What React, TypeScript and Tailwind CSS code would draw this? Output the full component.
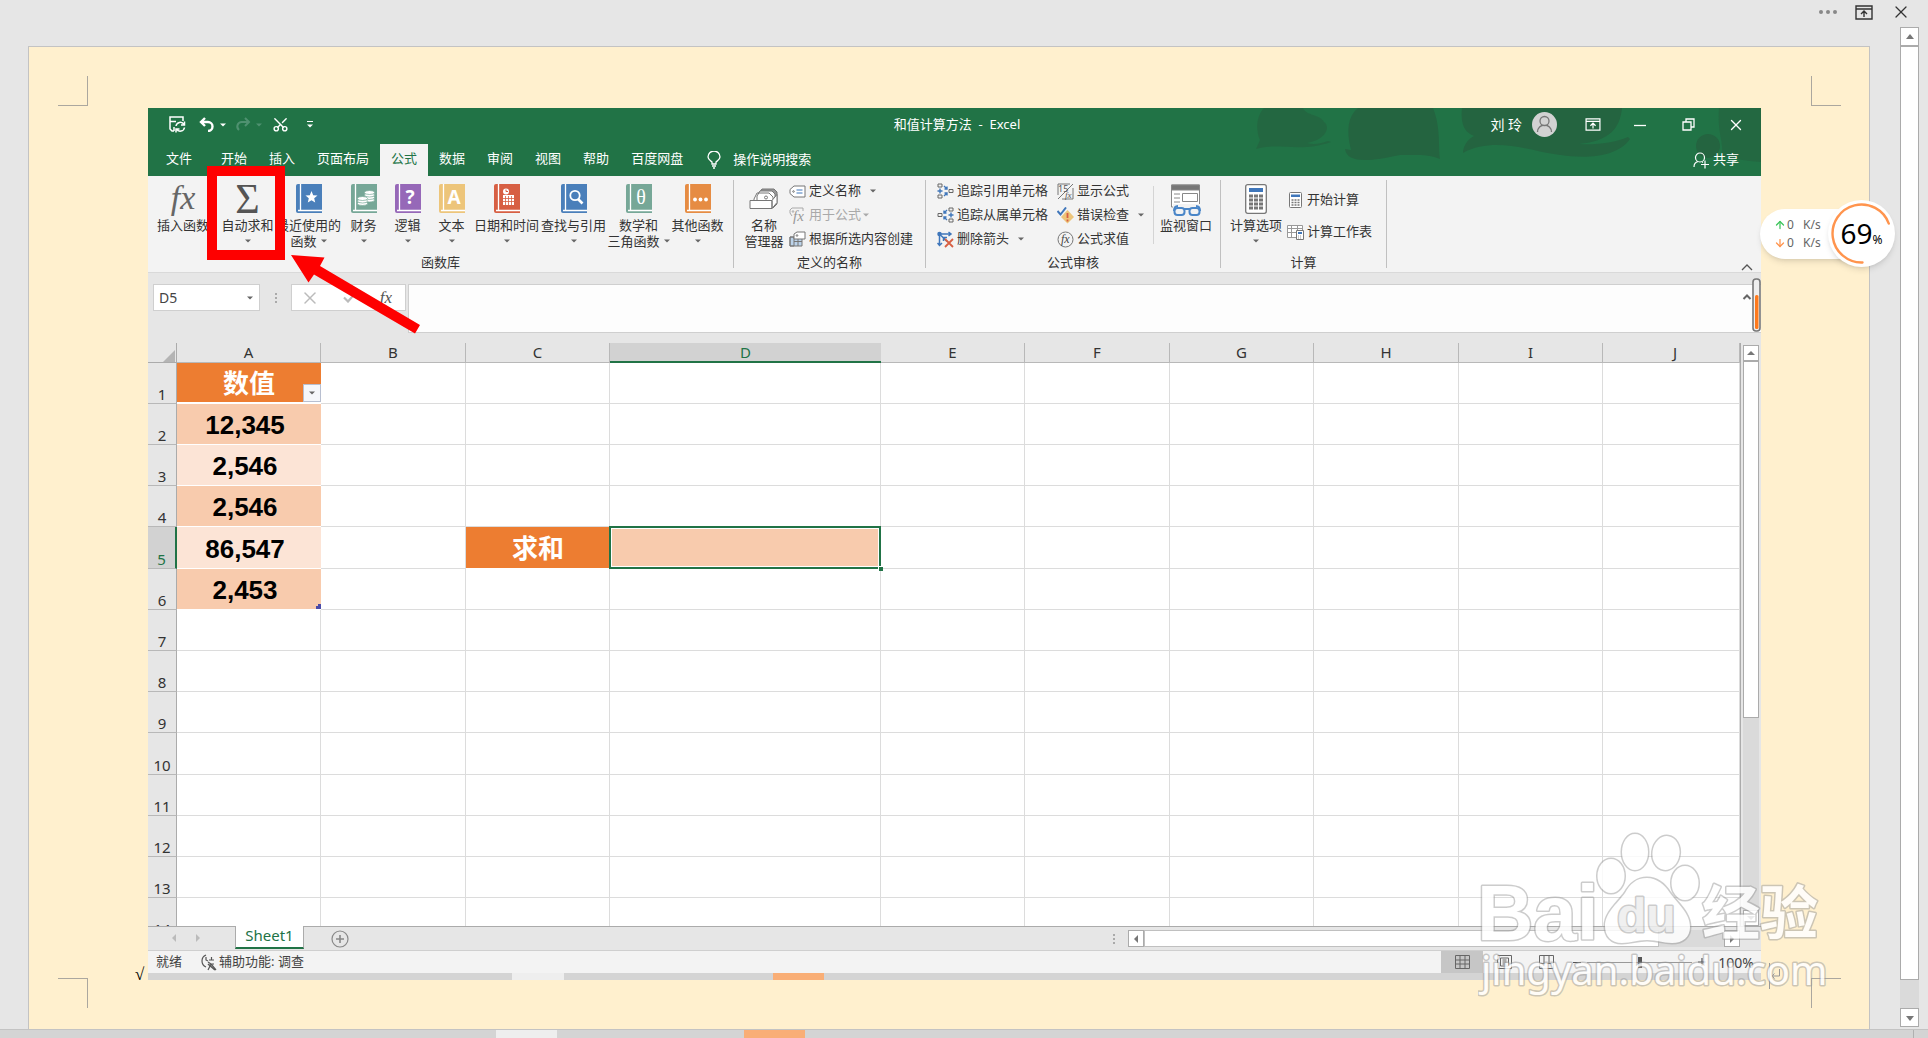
import type { ReactNode } from 'react';
import clsx from 'clsx';
import { ArrowDown, ArrowUp, Scissors, X } from 'lucide-react';

const tabs = ['开始', '插入', '页面布局', '公式', '数据', '审阅', '视图', '帮助', '百度网盘'];
const columns = ['A', 'B', 'C', 'D', 'E', 'F', 'G', 'H', 'I', 'J'];
const rows = [1, 2, 3, 4, 5, 6, 7, 8, 9, 10, 11, 12, 13, 14];
const values: Record<number, string> = { 2: '12,345', 3: '2,546', 4: '2,546', 5: '86,547', 6: '2,453' };

function Caret({ className = 'text-[#666]' }: { className?: string }) {
  return (
    <svg width="6" height="4" viewBox="0 0 6 4" className={clsx('shrink-0', className)} aria-hidden="true">
      <path d="M0 .5h6L3 3.500z" fill="currentColor" />
    </svg>
  );
}

function Triangle({ d, className = 'text-[#777]' }: { d: string; className?: string }) {
  return (
    <svg width="10" height="10" viewBox="0 0 10 10" className={className} aria-hidden="true">
      <path d={d} fill="currentColor" />
    </svg>
  );
}

function Book({ color, children }: { color: string; children: ReactNode }) {
  return (
    <svg width="26" height="29" viewBox="0 0 26 29" aria-hidden="true">
      <path d="M2 0h24v29H2a2 2 0 0 1-2-2V2a2 2 0 0 1 2-2z" fill={color} />
      <path d="M4.500 0v26M2 26.500h24" stroke="#fff" strokeWidth="1.300" />
      {children}
    </svg>
  );
}

function RibbonDisplayIcon({ className }: { className?: string }) {
  return (
    <svg width="18" height="15" viewBox="0 0 18 15" fill="none" stroke="currentColor" strokeWidth="1.400" className={className} aria-hidden="true">
      <path d="M1 1h16v13H1zM1 4h16M9 12V6.500M6 9l3-3 3 3" />
    </svg>
  );
}

function BigButton({ icon, label, second, width, caret = false }: { icon: ReactNode; label: string; second?: string; width: string; caret?: boolean }) {
  return (
    <button type="button" className={clsx('flex shrink-0 flex-col items-center pt-2 text-[13px] leading-4 whitespace-nowrap', width)}>
      <span className="flex h-[33px] items-start justify-center">{icon}</span>
      <span className="flex w-0 justify-center">{label}</span>
      <span className="flex h-4 w-0 items-center justify-center gap-1">
        {second}
        {caret && <Caret />}
      </span>
    </button>
  );
}

function SmallButton({ icon, label, caret, muted = false }: { icon: ReactNode; label: string; caret?: string; muted?: boolean }) {
  return (
    <button type="button" className={clsx('flex h-6 items-center gap-[3px] text-[13px] whitespace-nowrap', muted && 'text-[#a9a9a9]')}>
      <span className="flex w-[17px] shrink-0 justify-center">{icon}</span>
      {label}
      {caret && <Caret className={clsx(caret, muted ? 'text-[#a9a9a9]' : 'text-[#666]')} />}
    </button>
  );
}

function Group({ label, width, inset, children }: { label: string; width: string; inset: string; children: ReactNode }) {
  return (
    <section className={clsx('flex shrink-0 flex-col', width)} aria-label={label}>
      <div className={clsx('flex h-[77px]', inset)}>{children}</div>
      <div className="text-center text-[13px] leading-5">{label}</div>
    </section>
  );
}

function Separator() {
  return <div className="my-1 w-px shrink-0 bg-[#c0c0c0]" />;
}

function TraceIcon({ flip = false }: { flip?: boolean }) {
  return (
    <svg width="17" height="16" viewBox="0 0 17 16" fill="none" className={clsx(flip && 'rotate-180')} aria-hidden="true">
      <path d="M1 1h4v3H1zM1 12h4v3H1zM12 6.500h4v3h-4z" stroke="#666" />
      <path d="M3 5.500v5M0.500 8h5M7 3l3 3M10 3.500V6H7.500M7 13l3-3M7.500 10H10v2.500" stroke="#3f76ba" strokeWidth="1.400" />
    </svg>
  );
}

function TitleBar() {
  return (
    <header className="relative bg-[#217346] text-white">
      <svg width="521" height="68" viewBox="0 0 521 68" className="absolute top-0 right-0" aria-hidden="true">
        <g fill="#246440">
          <path d="M24 0C17 7 15 21 20 32L16 41C38 34 60 45 91 34L88 33C80 36 73 37 67 35C88 31 90 18 84 14C80 6 66 8 63 0Z" opacity=".8" />
          <path d="M118 0C108 8 106 22 111 42L105 41C107 55 128 54 160 47C176 47 190 46 200 51C198 39 201 20 193 0Z" />
          <path d="M222 0C220 18 226 25 234 28C226 32 223 40 223 45C245 33 270 37 294 42C330 51 374 54 390 31L388 29C374 35 356 37 339 36C370 33 380 20 382 0Z" />
          <circle cx="468" cy="38" r="12" />
          <path d="M479 0H521V54C505 53 493 50 482 48C484 34 477 25 479 0Z" opacity=".75" />
        </g>
      </svg>
      <div className="relative flex h-9 items-center pb-[3px]">
        <div className="flex flex-1 items-center pl-[21px]">
          <button type="button" aria-label="保存" className="w-[30px]">
            <svg width="17" height="17" viewBox="0 0 17 17" fill="none" stroke="currentColor" strokeWidth="1.500" aria-hidden="true">
              <path d="M5 15H3L1 13V1h13v4M1.500 5.500H7M5 15v-4" />
              <path d="M7 10a4.300 4.300 0 0 1 8-1.500M15.500 5.500v3.500H12M15.500 11.500a4.300 4.300 0 0 1-8 1.500M7 16.500V13h3.500" />
            </svg>
          </button>
          <button type="button" aria-label="撤消" className="flex w-[36px] items-center gap-[5px]">
            <svg width="16" height="15" viewBox="0 0 16 15" fill="none" stroke="currentColor" strokeWidth="2.400" aria-hidden="true">
              <path d="M6 1L2 5l4 4M2 5h7a4.500 4.500 0 0 1 0 9" />
            </svg>
            <Caret className="text-white" />
          </button>
          <button type="button" aria-label="恢复" className="flex w-[37px] items-center gap-[5px] text-[#4f9170]">
            <svg width="16" height="15" viewBox="0 0 16 15" fill="none" stroke="currentColor" strokeWidth="2" aria-hidden="true">
              <path d="M10 1l4 4-4 4M14 5H7a4.500 4.500 0 0 0-3 8" />
            </svg>
            <Caret className="text-[#4f9170]" />
          </button>
          <button type="button" aria-label="剪切" className="w-[35px]">
            <Scissors size={17} strokeWidth={2} className="-rotate-90" />
          </button>
          <button type="button" aria-label="自定义快速访问工具栏" className="flex flex-col gap-0.5">
            <span className="h-px w-[6px] bg-white" />
            <Caret className="text-white" />
          </button>
        </div>
        <h1 className="text-[13px] whitespace-pre">和值计算方法  -  Excel</h1>
        <div className="flex flex-1 items-center justify-end pr-4">
          <span className="mr-[10px] text-[14px]">刘 玲</span>
          <svg width="25" height="25" viewBox="0 0 25 25" className="mr-7" aria-hidden="true">
            <circle cx="12.500" cy="12.500" r="12.500" fill="#d2d2d2" />
            <path d="M5.500 20a7 7 0 0 1 14 0" fill="none" stroke="#777" strokeWidth="1.300" />
            <circle cx="12.500" cy="9" r="4.500" fill="#d2d2d2" stroke="#777" strokeWidth="1.300" />
          </svg>
          <button type="button" aria-label="功能区显示选项" className="mr-[33px]">
            <RibbonDisplayIcon className="h-[13px] w-[16px]" />
          </button>
          <button type="button" aria-label="最小化" className="mr-9">
            <svg width="12" height="12" viewBox="0 0 12 12" stroke="currentColor" strokeWidth="1.300" aria-hidden="true">
              <path d="M0 6.500h12" />
            </svg>
          </button>
          <button type="button" aria-label="还原" className="mr-8">
            <svg width="13" height="13" viewBox="0 0 13 13" fill="none" stroke="currentColor" strokeWidth="1.300" aria-hidden="true">
              <path d="M1 4h8v8H1zM4 4V1h8v8H9" />
            </svg>
          </button>
          <button type="button" aria-label="关闭">
            <X size={18} strokeWidth={1.800} />
          </button>
        </div>
      </div>
      <nav className="relative flex h-8 items-stretch text-[13px]">
        <button type="button" className="w-[62px] pb-0.5">文件</button>
        {tabs.map((tab) => (
          <button key={tab} type="button" className={clsx('px-[11px] pb-0.5 whitespace-nowrap', tab === '公式' && 'bg-[#f3f3f3] text-[#217346]')}>
            {tab}
          </button>
        ))}
        <button type="button" className="ml-[13px] flex items-center gap-3">
          <svg width="14" height="18" viewBox="0 0 14 18" fill="none" stroke="currentColor" strokeWidth="1.300" aria-hidden="true">
            <path d="M5 13v-2C3 9.500 1 8.500 1 6a5.700 5.700 0 0 1 12 0c0 2.500-2 3.500-4 5v2zM5 15h4M6 17h2" />
          </svg>
          操作说明搜索
        </button>
        <button type="button" className="mr-[22px] ml-auto flex items-center gap-1">
          <svg width="16" height="17" viewBox="0 0 16 17" fill="none" stroke="currentColor" strokeWidth="1.200" aria-hidden="true">
            <circle cx="7" cy="5.500" r="4.500" />
            <path d="M1 15c0-3 2-5 4-5.500M9 10l1 .5M8 12.500h8M12 8.500v8" />
          </svg>
          共享
        </button>
      </nav>
    </header>
  );
}

function Ribbon() {
  return (
    <div className="relative flex h-[97px] border-b border-[#d9d9d9] bg-[#f3f3f3] text-[#333]">
      <Group label="函数库" width="w-[585px]" inset="pl-1">
        <BigButton width="w-[62px]" label="插入函数" icon={<span className="font-['Liberation_Serif'] text-[34px] leading-7 text-[#666] italic">fx</span>} />
        <BigButton width="w-[67px]" label="自动求和" caret icon={<span className="font-['Liberation_Serif'] text-[42px] leading-[30px] text-[#555]">Σ</span>} />
        <BigButton
          width="w-[55px]"
          label="最近使用的"
          second="函数"
          caret
          icon={
            <Book color="#4a7fba">
              <path d="M15.500 7l1.700 4.200 4.300.3-3.300 2.800 1 4.200-3.700-2.300-3.700 2.300 1-4.200-3.300-2.800 4.300-.3z" fill="#fff" />
            </Book>
          }
        />
        <BigButton
          width="w-[55px]"
          label="财务"
          caret
          icon={
            <Book color="#76a797">
              <g fill="#fff" stroke="#76a797" strokeWidth=".7">
                <ellipse cx="18.500" cy="16" rx="5" ry="2" />
                <ellipse cx="18.500" cy="13.500" rx="5" ry="2" />
                <ellipse cx="18.500" cy="11" rx="5" ry="2" />
                <ellipse cx="18.500" cy="8.500" rx="5" ry="2" />
                <ellipse cx="11.500" cy="19.500" rx="5" ry="2" />
                <ellipse cx="11.500" cy="17" rx="5" ry="2" />
                <ellipse cx="11.500" cy="14.500" rx="5" ry="2" />
              </g>
            </Book>
          }
        />
        <BigButton width="w-[33px]" label="逻辑" caret icon={<Book color="#9668b8"><text x="15" y="20" textAnchor="middle" fontSize="19" fontWeight="700" fill="#fff">?</text></Book>} />
        <BigButton width="w-[55px]" label="文本" caret icon={<Book color="#edc57a"><text x="15" y="20" textAnchor="middle" fontSize="19" fontWeight="700" fill="#fff">A</text></Book>} />
        <BigButton
          width="w-[55px]"
          label="日期和时间"
          caret
          icon={
            <Book color="#d75f43">
              <rect x="9" y="11" width="11" height="10" fill="#fff" />
              <path d="M9 14.500h11M9 17.500h11M11.500 12v9M14.500 12v9M17.500 12v9" stroke="#d75f43" strokeWidth=".8" />
              <circle cx="12" cy="7.500" r="3" fill="#fff" />
              <path d="M12 5.500v2h2" fill="none" stroke="#d75f43" />
            </Book>
          }
        />
        <BigButton
          width="w-[79px]"
          label="查找与引用"
          caret
          icon={
            <Book color="#4a7fba">
              <circle cx="14" cy="11.500" r="4.700" fill="none" stroke="#fff" strokeWidth="1.800" />
              <path d="M17 15l4.500 4.500" stroke="#fff" strokeWidth="2.600" />
            </Book>
          }
        />
        <BigButton width="w-[51px]" label="数学和" second="三角函数" caret icon={<Book color="#76a797"><text x="15" y="20" textAnchor="middle" fontSize="20" fontFamily="Liberation Serif" fill="#fff">θ</text></Book>} />
        <BigButton
          width="w-[67px]"
          label="其他函数"
          caret
          icon={
            <Book color="#e68c43">
              <g fill="#fff">
                <circle cx="10" cy="15.500" r="1.900" />
                <circle cx="15.500" cy="15.500" r="1.900" />
                <circle cx="21" cy="15.500" r="1.900" />
              </g>
            </Book>
          }
        />
      </Group>
      <Separator />
      <Group label="定义的名称" width="w-[191px]" inset="pl-[7px]">
        <BigButton
          width="w-[46px]"
          label="名称"
          second="管理器"
          icon={
            <svg width="30" height="28" viewBox="0 0 30 28" fill="#fff" stroke="#777" aria-hidden="true">
              <path d="M9 10l4-5h12l3 3v12l-4 4z" fill="#999" />
              <path d="M8 12l3-5h12l3 3v9H8zM5 15l3-6h12l4 4v6H5z" />
              <circle cx="17" cy="13.500" r="1.500" />
              <path d="M1 16.500h22v8H1zM23 16.500l5-6v8l-5 6z" />
            </svg>
          }
        />
        <div className="ml-[2px] pt-[3px]">
          <SmallButton
            label="定义名称"
            caret="ml-[6px]"
            icon={
              <svg width="17" height="13" viewBox="0 0 17 13" fill="none" stroke="#777" aria-hidden="true">
                <path d="M5 1h11v11H5L1 8.500v-4z" fill="#fff" />
                <circle cx="4.500" cy="6.500" r=".8" />
                <path d="M7.500 5h6M7.500 8h6" stroke="#3f76ba" />
              </svg>
            }
          />
          <SmallButton
            label="用于公式"
            muted
            caret="-ml-px"
            icon={
              <svg width="17" height="17" viewBox="0 0 17 17" fill="none" stroke="#a9a9a9" aria-hidden="true">
                <path d="M3 9L1 6V3l2-2h11v3" />
                <circle cx="4" cy="4.500" r=".8" />
                <text x="4" y="14" fontSize="15" fontStyle="italic" fontFamily="Liberation Serif" fill="#999" stroke="none">fx</text>
              </svg>
            }
          />
          <SmallButton
            label="根据所选内容创建"
            icon={
              <svg width="17" height="16" viewBox="0 0 17 16" fill="#fff" stroke="#777" aria-hidden="true">
                <path d="M1 6h12v9H1z" fill="#bcd3ea" />
                <path d="M1 6h4v9H1zM5 10.500h8M9 6v9" fill="none" />
                <path d="M5 3l3-2h8v7H5z" />
                <circle cx="8" cy="4.500" r=".8" />
              </svg>
            }
          />
        </div>
      </Group>
      <Separator />
      <Group label="公式审核" width="w-[294px]" inset="pl-[11px]">
        <div className="w-[120px] pt-[3px]">
          <SmallButton label="追踪引用单元格" icon={<TraceIcon />} />
          <SmallButton label="追踪从属单元格" icon={<TraceIcon flip />} />
          <SmallButton
            label="删除箭头"
            caret="ml-[6px]"
            icon={
              <svg width="17" height="17" viewBox="0 0 17 17" fill="none" stroke="#3f76ba" strokeWidth="1.500" aria-hidden="true">
                <circle cx="2.500" cy="3" r="1.500" fill="#3f76ba" />
                <path d="M3 3h11M11.500 1L14 3l-2.500 2M2.500 3v11M.5 12l2 2.500L5 12M4 4.500l6 6M6.500 10V6.500H10" />
                <path d="M8 8l8 8M16 8l-8 8" stroke="#d75f43" strokeWidth="1.800" />
              </svg>
            }
          />
        </div>
        <div className="w-[96px] pt-[3px]">
          <SmallButton
            label="显示公式"
            icon={
              <svg width="17" height="17" viewBox="0 0 17 17" fill="none" stroke="#777" aria-hidden="true">
                <path d="M16 5v11H5M1 12V1h12M1 16L16 1" />
                <text x="1" y="9" fontSize="9" fill="#555" stroke="none">15</text>
                <text x="8" y="15" fontSize="9" fontStyle="italic" fontFamily="Liberation Serif" fill="#555" stroke="none">fx</text>
              </svg>
            }
          />
          <SmallButton
            label="错误检查"
            caret="ml-[6px]"
            icon={
              <svg width="17" height="17" viewBox="0 0 17 17" fill="none" aria-hidden="true">
                <path d="M10.500 3l6.500 7-6.500 6.500-6.500-6.500z" fill="#edc57a" />
                <path d="M10.500 6v5M10.500 12.500v2" stroke="#d75f43" strokeWidth="1.800" />
                <path d="M.5 4l3 3.500L9 .5" stroke="#3f76ba" strokeWidth="2" />
              </svg>
            }
          />
          <SmallButton
            label="公式求值"
            icon={
              <svg width="17" height="17" viewBox="0 0 17 17" fill="none" stroke="#777" aria-hidden="true">
                <circle cx="8.500" cy="8.500" r="7.500" />
                <text x="4" y="12" fontSize="12" fontStyle="italic" fontFamily="Liberation Serif" fill="#444" stroke="none">fx</text>
              </svg>
            }
          />
        </div>
        <div className="mt-[10px] h-[58px] w-px bg-[#d4d4d4]" />
        <BigButton
          width="w-[64px]"
          label="监视窗口"
          icon={
            <svg width="32" height="33" viewBox="0 0 32 33" fill="none" stroke="#888" aria-hidden="true">
              <path d="M1.500 1h28v22h-28z" fill="#fff" />
              <path d="M1.500 1h28v5h-28z" fill="#777" />
              <path d="M4 10h6M4 14h6M4 18h6M12.500 9.500h15v8h-15z" />
              <path d="M3 20h29v13H3z" fill="#f3f3f3" stroke="none" />
              <path d="M4 27c0-4 2-5 4-5M30 27c0-4-2-5-4-5M14 25h6" stroke="#4a86c8" strokeWidth="2" />
              <rect x="4.500" y="24" width="10" height="7" rx="3" stroke="#4a86c8" strokeWidth="2" />
              <rect x="19.500" y="24" width="10" height="7" rx="3" stroke="#4a86c8" strokeWidth="2" />
            </svg>
          }
        />
      </Group>
      <Separator />
      <Group label="计算" width="w-[165px]" inset="pl-1">
        <BigButton
          width="w-[62px]"
          label="计算选项"
          caret
          icon={
            <svg width="22" height="30" viewBox="0 0 22 30" aria-hidden="true">
              <rect x=".7" y=".7" width="20.600" height="28.600" rx="2" fill="#fff" stroke="#777" strokeWidth="1.300" />
              <path d="M4 4h14v4H4z" fill="#3f76ba" />
              <path d="M4 12h14M4 16h14M4 20h14M4 24h14" stroke="#777" strokeWidth="3" strokeDasharray="4 1" />
            </svg>
          }
        />
        <div className="pt-3">
          <SmallButton
            label="开始计算"
            icon={
              <svg width="13" height="16" viewBox="0 0 13 16" aria-hidden="true">
                <rect x=".5" y=".5" width="12" height="15" rx="1" fill="#fff" stroke="#777" />
                <path d="M2 2.500h9v2.500H2z" fill="#3f76ba" />
                <path d="M2.500 8h8M2.500 10.500h8M2.500 13h8" stroke="#777" strokeWidth="1.500" strokeDasharray="2 1" />
              </svg>
            }
          />
          <div className="h-2" />
          <SmallButton
            label="计算工作表"
            icon={
              <svg width="17" height="16" viewBox="0 0 17 16" fill="none" stroke="#999" aria-hidden="true">
                <path d="M.5 1.500h15v12H.5z" fill="#fff" />
                <path d="M.5 4.500h15M.5 8.500h15M4.500 1.500v12M10.500 1.500v12" />
                <path d="M9.500 6.500h7v9h-7z" fill="#fff" stroke="#777" />
                <path d="M11 9h4" stroke="#3f76ba" strokeWidth="2" />
                <path d="M11 12h4M11 14h4" strokeDasharray="1 1" />
              </svg>
            }
          />
        </div>
      </Group>
      <Separator />
      <button type="button" aria-label="折叠功能区" className="mt-auto mr-2 mb-px ml-auto">
        <svg width="12" height="8" viewBox="0 0 12 8" fill="none" stroke="#555" strokeWidth="1.300" aria-hidden="true">
          <path d="M1 7l5-5 5 5" />
        </svg>
      </button>

      {/* Highlight frame around the AutoSum button */}
      <div className="absolute -top-[10px] left-[59px] h-[94px] w-[78px] border-10 border-[#fe0000]" />
      <svg width="130" height="82" viewBox="0 0 130 82" className="absolute top-[78px] left-[142px] z-10" aria-hidden="true">
        <path d="M1 1L34.500 3.500L30 12L130 71L125 79.500L24 20.500L18.500 28.500Z" fill="#fe0000" />
      </svg>
    </div>
  );
}

function Grip() {
  return (
    <span className="flex w-[2px] flex-col gap-[2px]">
      <span className="h-[2px] bg-[#aaa]" />
      <span className="h-[2px] bg-[#aaa]" />
      <span className="h-[2px] bg-[#aaa]" />
    </span>
  );
}

function FormulaBar() {
  return (
    <div className="relative flex items-start bg-[#e6e6e6] pt-[11px] pb-[10px] pl-[5px] text-[#444]">
      <div className="flex h-[27px] w-[107px] items-center border border-[#cfcfcf] bg-white">
        <input aria-label="名称框" defaultValue="D5" className="w-0 flex-1 pl-[5px] text-[14px] outline-none" />
        <button type="button" aria-label="名称列表" className="px-[6px]"><Caret /></button>
      </div>
      <div className="flex h-[27px] w-[31px] items-center justify-center"><Grip /></div>
      <div className="flex h-[27px] w-[115px] items-center justify-between border border-[#cfcfcf] bg-white pr-[13px] pl-[8px]">
        <button type="button" aria-label="取消" className="text-[#bbb]"><X size={20} strokeWidth={1.800} /></button>
        <button type="button" aria-label="输入" className="text-[#bbb]">
          <svg width="14" height="11" viewBox="0 0 14 11" fill="none" stroke="currentColor" strokeWidth="2.200" aria-hidden="true">
            <path d="M1 5.500l4 4L12.500 1" />
          </svg>
        </button>
        <button type="button" aria-label="插入函数" className="font-['Liberation_Serif'] text-[17px] leading-5 text-[#555] italic">fx</button>
      </div>
      <input aria-label="编辑栏" className="ml-[2px] h-[49px] min-w-0 flex-1 border-y border-l border-[#cfcfcf] bg-[#fdfdfd] outline-none" />
      <div className="h-[49px] w-[9px] border-y border-[#cfcfcf] bg-[#fdfdfd]" />
      <svg width="20" height="54" viewBox="0 0 20 54" className="absolute top-[5px] right-0" aria-hidden="true">
        <path d="M2.500 21l3.500-3.500 3.500 3.500" fill="none" stroke="#666" strokeWidth="2" />
        <rect x="12" y="1" width="7" height="52" rx="3" fill="#eee" stroke="#777" strokeWidth="1.600" />
        <rect x="14" y="17" width="3.500" height="34" rx="1.500" fill="#ff7a1c" />
      </svg>
    </div>
  );
}

function Sheet() {
  return (
    <div className="flex h-[583px] overflow-hidden bg-[#e6e6e6]">
      <div className="min-w-0 flex-1 border-r border-[#ababab]">
        <table className="w-full table-fixed border-separate border-spacing-0 text-[15px] text-[#333]">
          <colgroup>
            <col className="w-[29px]" />
            <col className="w-[144px]" />
            <col className="w-[145px]" />
            <col className="w-[144px]" />
            <col className="w-[271px]" />
            <col className="w-[144px]" />
            <col className="w-[145px]" />
            <col className="w-[144px]" />
            <col className="w-[145px]" />
            <col className="w-[144px]" />
            <col />
          </colgroup>
          <thead>
            <tr className="h-[20px] leading-[19px]">
              <td className="border-r border-b border-[#ababab] p-0 align-bottom">
                <svg width="13" height="12" viewBox="0 0 13 12" className="ml-auto" aria-hidden="true">
                  <path d="M12 0v12H0z" fill="#b4b4b4" />
                </svg>
              </td>
              {columns.map((name) => (
                <th
                  key={name}
                  scope="col"
                  className={clsx(
                    'p-0 font-normal',
                    name === 'D' ? 'border-b-2 border-[#217346] bg-[#d2d2d2] leading-[18px] text-[#217346]' : 'border-r border-b border-[#b8b8b8]',
                    name === 'J' && 'pl-2',
                  )}
                >
                  {name}
                </th>
              ))}
            </tr>
          </thead>
          <tbody>
            {rows.map((row) => (
              <tr key={row} className={row === 5 || row === 10 ? 'h-[42px]' : 'h-[41px]'}>
                <th
                  scope="row"
                  className={clsx(
                    'border-b border-b-[#b8b8b8] p-0 align-bottom leading-[17px] font-normal',
                    row === 5 ? 'border-r-2 border-r-[#217346] bg-[#d2d2d2] text-[#217346]' : 'border-r border-r-[#ababab] bg-[#e6e6e6]',
                  )}
                >
                  {row}
                </th>
                {columns.map((name) => {
                  if (name === 'A' && row === 1) {
                    return (
                      <td key={name} className="relative border-b-2 border-white bg-[#ed7d31] p-0 text-center text-[26px] leading-8 font-bold text-white">
                        数值
                        <button type="button" aria-label="筛选" className="absolute right-0 bottom-0 flex h-[18px] w-[18px] items-center justify-center border border-[#b8bfd0] bg-[#f5f7fb]">
                          <Caret />
                        </button>
                      </td>
                    );
                  }
                  if (name === 'A' && row < 7) {
                    return (
                      <td
                        key={name}
                        className={clsx(
                          "relative border-b border-white p-0 pt-[2px] pr-2 text-center font-['Liberation_Sans'] text-[26px] leading-8 font-bold text-black",
                          row % 2 ? 'bg-[#fce4d6]' : 'bg-[#f8cbad]',
                        )}
                      >
                        {values[row]}
                        {row === 6 && <span className="absolute right-0 bottom-0 h-[5px] w-[5px] border-r-3 border-b-3 border-[#4b4ba8]" />}
                      </td>
                    );
                  }
                  if (name === 'C' && row === 5) {
                    return (
                      <td key={name} className="border-b border-white bg-[#ed7d31] p-0 text-center text-[26px] leading-8 font-bold text-white">
                        求和
                      </td>
                    );
                  }
                  if (name === 'D' && row === 5) {
                    return (
                      <td key={name} className="relative bg-[#f8cbad] p-0">
                        <div className="absolute -top-px right-0 bottom-0 -left-px border-2 border-[#217346] outline outline-white -outline-offset-3" />
                        <div className="absolute -right-[2px] -bottom-[2px] h-[5px] w-[5px] border-t border-l border-white bg-[#217346]" />
                      </td>
                    );
                  }
                  return <td key={name} className="border-r border-b border-[#dcdcdc] bg-white p-0" />;
                })}
              </tr>
            ))}
          </tbody>
        </table>
      </div>
      <div className="flex w-[20px] flex-col pt-[2px] pr-[2px] pl-[2px]">
        <button type="button" aria-label="向上滚动" className="flex h-[16px] items-center justify-center border border-[#ababab] bg-white"><Triangle d="M1 7h8L5 3z" /></button>
        <div className="h-[357px] border border-[#ababab] bg-white" />
        <div className="flex-1 bg-[#dadada]" />
        <button type="button" aria-label="向下滚动" className="flex h-[16px] items-center justify-center border border-[#ababab] bg-white"><Triangle d="M1 3h8L5 7z" /></button>
      </div>
    </div>
  );
}

function SheetTabs() {
  return (
    <div className="flex h-[25px] items-start border-t border-b border-t-[#ababab] border-b-[#cfcfcf] bg-[#e6e6e6]">
      <div className="flex w-[87px] items-center gap-[14px] pt-[6px] pl-[21px]">
        <Triangle d="M7 1v8L3 5z" className="text-[#bbb]" />
        <Triangle d="M3 1v8l4-4z" className="text-[#bbb]" />
      </div>
      <button type="button" className="-mt-px h-[23px] w-[69px] border-x border-b-2 border-x-[#ababab] border-b-[#217346] bg-white pb-1 text-[15px] leading-4 text-[#217346]">Sheet1</button>
      <button type="button" aria-label="新工作表" className="mt-[3px] ml-[27px]">
        <svg width="18" height="18" viewBox="0 0 18 18" fill="none" stroke="#888" strokeWidth="1.200" aria-hidden="true">
          <circle cx="9" cy="9" r="8" />
          <path d="M9 5v8M5 9h8" strokeWidth="1.600" />
        </svg>
      </button>
      <div className="mt-[3px] mr-[21px] ml-auto flex items-center">
        <Grip />
        <div className="ml-[13px] flex h-[17px] w-[612px] bg-[#dadada]">
          <button type="button" aria-label="向左滚动" className="flex w-[16px] items-center justify-center border border-[#ababab] bg-white"><Triangle d="M7 1v8L3 5z" /></button>
          <div className="w-[515px] border border-[#c0c0c0] bg-white" />
          <button type="button" aria-label="向右滚动" className="ml-auto flex w-[16px] items-center justify-center border border-[#ababab] bg-white"><Triangle d="M3 1v8l4-4z" /></button>
        </div>
      </div>
    </div>
  );
}

function StatusBar() {
  return (
    <div className="flex h-[22px] items-center bg-[#f3f3f3] pl-2 text-[13px] text-[#444]">
      <span>就绪</span>
      <button type="button" className="ml-[18px] flex items-center gap-[2px]">
        <svg width="17" height="17" viewBox="0 0 17 17" fill="none" stroke="#555" strokeWidth="1.200" aria-hidden="true">
          <path d="M6 1a6.500 6.500 0 0 0 0 12M6 3v3l2 1M9 6h5M11.500 3v3M8 8l3 2h3M11 10l-3 6M11 10l5 6" />
          <path d="M8 10l7 6" strokeWidth="1.600" />
        </svg>
        辅助功能: 调查
      </button>
      <button type="button" aria-label="普通" className="ml-auto flex h-full w-[42px] items-center justify-center bg-[#c6c6c6]">
        <svg width="15" height="14" viewBox="0 0 15 14" fill="none" stroke="#666" aria-hidden="true">
          <path d="M.5.5h14v13H.5zM.5 5h14M.5 9h14M5 .5v13M10 .5v13" />
        </svg>
      </button>
      <button type="button" aria-label="页面布局" className="flex w-[42px] justify-center">
        <svg width="15" height="14" viewBox="0 0 15 14" fill="none" stroke="#666" aria-hidden="true">
          <path d="M.5.5h14v13H.5zM3.500 3h8v8h-8zM5.500 5h4M5.500 7h4M5.500 9h4" />
        </svg>
      </button>
      <button type="button" aria-label="分页预览" className="flex w-[42px] justify-center">
        <svg width="15" height="14" viewBox="0 0 15 14" fill="none" stroke="#666" aria-hidden="true">
          <path d="M.5.5h14v13H.5zM5 .5v8h5v-8M.5 8.500h14" />
        </svg>
      </button>
      <button type="button" aria-label="缩小" className="ml-[6px] h-px w-2 bg-[#555]" />
      <input
        type="range"
        aria-label="显示比例"
        className="mx-[6px] h-px w-[105px] appearance-none bg-[#999] [&::-webkit-slider-thumb]:h-[11px] [&::-webkit-slider-thumb]:w-[4px] [&::-webkit-slider-thumb]:appearance-none [&::-webkit-slider-thumb]:bg-[#555]"
      />
      <button type="button" aria-label="放大">
        <svg width="8" height="8" viewBox="0 0 8 8" stroke="#555" strokeWidth="1.200" aria-hidden="true">
          <path d="M0 4h8M4 0v8" />
        </svg>
      </button>
      <span className="mr-[7px] ml-3 text-[14px]">100%</span>
    </div>
  );
}

function CropMark({ className }: { className: string }) {
  return <div className={clsx('absolute h-[30px] w-[30px] border-[#aba79f]', className)} />;
}

function Watermark() {
  return (
    <svg width="350" height="172" viewBox="0 0 350 172" className="absolute right-[41px] bottom-[26px] z-10 opacity-85" aria-label="Baidu 经验">
      <g fill="#fff" stroke="#9c9c9c" strokeOpacity=".6" strokeWidth="3" strokeLinejoin="round" style={{ paintOrder: 'stroke' }}>
        <ellipse cx="133" cy="45" rx="13.500" ry="17" />
        <ellipse cx="157" cy="21" rx="13" ry="18" />
        <ellipse cx="188" cy="22" rx="13.500" ry="17" transform="rotate(8 188 22)" />
        <ellipse cx="207" cy="52" rx="13.500" ry="17" />
        <path d="M169 47C179 47 187 54 192 62C200 73 212 82 212 96C212 106 205 112 194 112C184 112 180 109 169 109C158 109 154 112 144 112C133 112 127 105 127 95C127 82 139 73 147 62C152 53 158 47 169 47Z" />
        <text x="-1" y="109" fontSize="78" fontWeight="700" fontFamily="Liberation Sans">Bai</text>
        <text x="139" y="101" fontSize="48" fontWeight="700" fontFamily="Liberation Sans" fill="#eee">du</text>
        <text x="224" y="103" fontSize="58" fontWeight="700" fontFamily="Noto Sans CJK SC">经验</text>
        <text x="3" y="154" fontSize="40" fontFamily="Noto Sans">jingyan.baidu.com</text>
      </g>
    </svg>
  );
}

function SpeedWidget() {
  return (
    <div className="absolute top-[200px] right-[33px] z-20 flex items-center text-[#666]">
      <div className="-mr-[35px] h-[50px] w-[103px] rounded-l-full bg-white pt-[7px] pl-[14px] text-[12px] leading-[18px] shadow-md">
        <div className="flex items-center">
          <ArrowUp size={12} strokeWidth={2.500} className="mr-px text-[#3cc45a]" />
          <span className="w-4">0</span>K/s
        </div>
        <div className="flex items-center">
          <ArrowDown size={12} strokeWidth={2.500} className="mr-px text-[#ff944d]" />
          <span className="w-4">0</span>K/s
        </div>
      </div>
      <div className="relative flex h-[67px] w-[67px] items-center justify-center rounded-full bg-white shadow-md">
        <svg width="67" height="67" viewBox="0 0 67 67" className="absolute inset-0" aria-hidden="true">
          <path d="M34.500 62.500A29 29 0 1 1 60.800 23.600" fill="none" stroke="#ff944d" strokeWidth="2.400" strokeLinecap="round" />
        </svg>
        <div className="flex items-baseline pb-[2px] text-black">
          <span className="text-[28px] leading-8">69</span>
          <span className="text-[12px]">%</span>
        </div>
      </div>
    </div>
  );
}

export default function App() {
  return (
    <main className="relative flex min-h-screen flex-col overflow-hidden bg-[#e6e6e6] font-['Noto_Sans','Noto_Sans_CJK_SC',sans-serif]">
      <div className="flex h-[27px] items-start justify-end pt-1 pr-[17px] text-[#333]">
        <button type="button" aria-label="更多" className="mt-[6px] mr-[18px] flex gap-[3px]">
          <span className="h-1 w-1 rounded-full bg-[#888]" />
          <span className="h-1 w-1 rounded-full bg-[#888]" />
          <span className="h-1 w-1 rounded-full bg-[#888]" />
        </button>
        <button type="button" aria-label="功能区显示选项" className="mt-px mr-[18px]"><RibbonDisplayIcon /></button>
        <button type="button" aria-label="关闭" className="-mt-0.5"><X size={20} strokeWidth={1.500} /></button>
      </div>

      <div className="flex flex-1 items-stretch">
        <article className="relative mt-[19px] ml-7 min-w-0 flex-1 border-x border-t border-[#c3c3c3] bg-[#fff0ce] pt-[61px] pr-[108px] pb-[49px] pl-[119px]">
          <CropMark className="top-[29px] left-[29px] border-r border-b" />
          <CropMark className="top-[29px] right-[28px] border-b border-l" />
          <CropMark className="bottom-[21px] left-[29px] border-t border-r" />
          <CropMark className="right-[28px] bottom-[21px] border-t border-l" />

          <TitleBar />
          <Ribbon />
          <FormulaBar />
          <Sheet />
          <SheetTabs />
          <StatusBar />
          <div className="flex h-[7px] bg-[#d4d4d4]">
            <div className="ml-[364px] w-[52px] bg-[#eee]" />
            <div className="ml-[209px] w-[51px] bg-[#f9ae76]" />
          </div>
          <span className="absolute bottom-[44px] left-[106px] font-['Liberation_Serif'] text-[17px] leading-5 text-black">√</span>
          <svg width="16" height="26" viewBox="0 0 16 26" fill="none" stroke="#999" className="absolute right-[88px] bottom-[40px]" aria-hidden="true">
            <path d="M4.500 0v26M14.500 6v7H7M9.500 10.500L7 13l2.500 2.500" />
          </svg>
          <Watermark />
        </article>
        <div className="mr-[9px] ml-[30px] flex w-[19px] flex-col pb-[2px]">
          <button type="button" aria-label="向上滚动" className="flex h-[19px] items-center justify-center border border-[#ababab] bg-white"><Triangle d="M1 7h8L5 2z" /></button>
          <div className="h-[934px] border border-[#ababab] bg-white" />
          <div className="flex-1 bg-[#dadada]" />
          <button type="button" aria-label="向下滚动" className="flex h-[19px] items-center justify-center border border-[#ababab] bg-white"><Triangle d="M1 3h8L5 8z" /></button>
        </div>
      </div>

      <footer className="flex h-[9px] border-t border-[#c3c3c3] bg-[#d4d4d4]">
        <div className="ml-[496px] w-[61px] bg-[#eee]" />
        <div className="ml-[187px] w-[61px] bg-[#f9ae76]" />
        <div className="mr-[14px] ml-auto w-px bg-[#b0b0b0]" />
      </footer>
      <SpeedWidget />
    </main>
  );
}
